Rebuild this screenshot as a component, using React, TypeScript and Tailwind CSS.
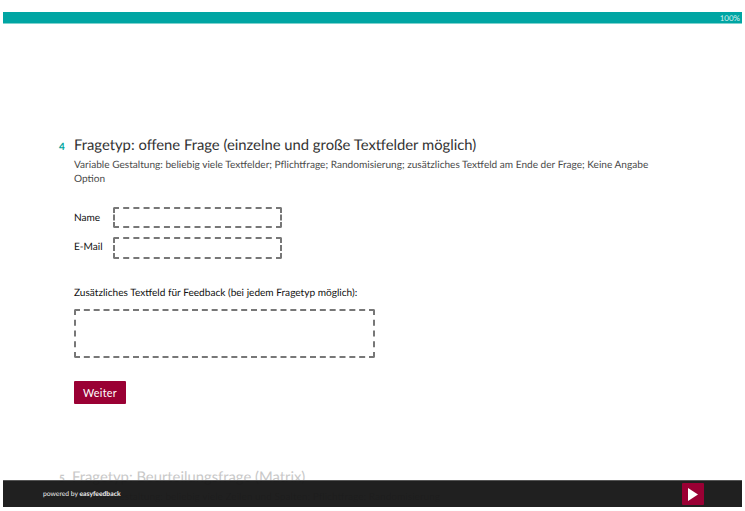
export default function App() {
  return (
    <div className="relative h-[511px] w-[745px] overflow-hidden bg-white font-['Lato','Liberation_Sans',sans-serif] [text-rendering:geometricPrecision]">
      <div className="px-[3px] pt-3">
        <div className="flex h-[12px] items-center justify-end border-b border-[#7fd2ce] bg-[#00a5a3] pr-[2px] text-[8px] leading-none text-[#d5f0ee]">
          100%
        </div>
      </div>
      <div className="pl-[59px] pt-[111px]">
        <div className="flex items-baseline">
          <span className="w-[15px] text-[10px] font-bold text-[#00a6a0]">4</span>
          <h1 className="text-[14.8px] leading-[20px] text-[#333333]">Fragetyp: offene Frage (einzelne und große Textfelder möglich)</h1>
        </div>
        <div className="ml-[15px]">
          <p className="mt-[3px] w-[590px] text-[10.1px] leading-[14px] text-[#4a4a4a]">
            Variable Gestaltung: beliebig viele Textfelder; Pflichtfrage; Randomisierung; zusätzliches Textfeld am Ende der Frage; Keine Angabe Option
          </p>
          <div className="mt-[21px] flex flex-col gap-[9px]">
            <div className="flex items-center">
              <label className="w-[39px] pt-[2px] text-[10.1px] text-[#111111]">Name</label>
              <div className="h-[21px] w-[169px] rounded-[2px] border-2 border-dashed border-[#777777]" />
            </div>
            <div className="flex items-center">
              <label className="w-[39px] text-[10.1px] text-[#111111]">E-Mail</label>
              <div className="h-[22px] w-[169px] rounded-[2px] border-2 border-dashed border-[#777777]" />
            </div>
          </div>
          <p className="mt-[27px] text-[10.1px] leading-[15px] text-[#111111]">Zusätzliches Textfeld für Feedback (bei jedem Fragetyp möglich):</p>
          <div className="mt-[8px] h-[49px] w-[301px] rounded-[2px] border-2 border-dashed border-[#777777]" />
          <button className="mt-[23px] block h-[23px] w-[52px] rounded-[1px] bg-[#9a0034] pt-px text-[10.8px] tracking-[0.3px] text-white">Weiter</button>
        </div>
        <div className="mt-[63px] flex items-baseline text-[#c8c8c8]">
          <span className="w-[13px] text-[10px] font-bold">5</span>
          <span className="text-[14.8px] leading-[20px]">Fragetyp: Beurteilungsfrage (Matrix)</span>
        </div>
        <p className="ml-[15px] mt-[3px] text-[10.1px] leading-[14px] text-[#c8c8c8]">Variable Gestaltung: beliebig viele Zeilen und Spalten; Pflichtfrage; Randomisierung</p>
      </div>
      <div className="absolute bottom-[4px] left-[3px] right-[3px] flex h-[27px] items-center justify-between border-t border-[#555555] bg-[#141414]/95 pl-[40px] pr-[38px]">
        <span className="text-[6.75px] text-[#eeeeee]">powered by <b>easyfeedback</b></span>
        <div className="flex h-[22px] w-[22px] items-center justify-center rounded-[1px] bg-[#9a0034]">
          <svg width="10" height="13" viewBox="0 0 10 13"><path d="M0 0 L10 6.5 L0 13 Z" fill="#ffffff" /></svg>
        </div>
      </div>
    </div>
  );
}
